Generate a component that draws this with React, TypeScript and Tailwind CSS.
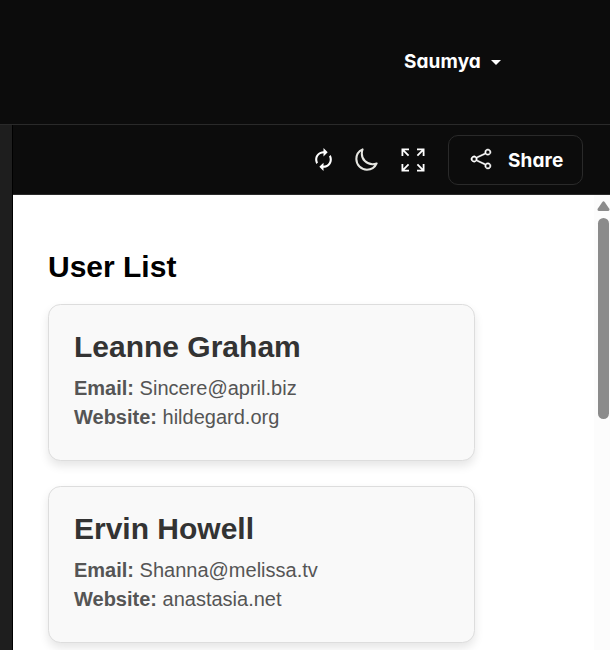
import React from "react";
import { BsShare } from "react-icons/bs";
import { IoMoonOutline } from "react-icons/io5";
import { MdAutorenew } from "react-icons/md";

const users = [
  { name: "Leanne Graham", email: "Sincere@april.biz", website: "hildegard.org" },
  { name: "Ervin Howell", email: "Shanna@melissa.tv", website: "anastasia.net" },
];

function ExpandIcon() {
  return (
    <svg className="ml-[22px] shrink-0" width="24" height="24" viewBox="0 0 24 24" fill="none" stroke="currentColor" strokeWidth="1.8">
      <path d="M1.4 8V1.4H8M1.4 1.4L7.6 7.6" />
      <path d="M16 1.4H22.6V8M22.6 1.4L16.4 7.6" />
      <path d="M1.4 16V22.6H8M1.4 22.6L7.6 16.4" />
      <path d="M16 22.6H22.6V16M22.6 22.6L16.4 16.4" />
    </svg>
  );
}

function UserCard({ name, email, website }: { name: string; email: string; website: string }) {
  return (
    <article className="h-[157px] w-[427px] rounded-[12.5px] border border-[#dddddd] bg-[#f9f9f9] px-[25px] pt-6 shadow-[0_5px_10px_rgba(0,0,0,0.1)]">
      <h2 className="text-[30px] leading-[35px] font-bold text-[#333333]">{name}</h2>
      <p className="mt-[10px] text-[20px] leading-[29px] text-[#555555]">
        <strong>Email:</strong> {email}
        <br />
        <strong>Website:</strong> {website}
      </p>
    </article>
  );
}

export default function App() {
  return (
    <div className="flex h-[650px] w-[610px] flex-col overflow-hidden bg-[#0c0c0c] text-white">
      <header className="flex h-[125px] shrink-0 items-center border-b border-[#2a2a2a] pl-[404px] font-[Inter,sans-serif]">
        <span className="text-[19px] leading-6 font-bold tracking-[0.1px] [font-feature-settings:'cv11']">Saumya</span>
        <svg className="ml-[10px]" width="10" height="5" viewBox="0 0 10 5" fill="currentColor">
          <path d="M0 0H10L5 5Z" />
        </svg>
      </header>
      <div className="flex min-h-0 flex-1">
        <aside className="w-[13px] shrink-0 border-r border-black bg-[#1e1e1e]" />
        <div className="flex min-w-0 flex-1 flex-col">
          <div className="flex h-[70px] shrink-0 items-center border-b border-[#2a2a2a] pl-[298px]">
            <MdAutorenew className="shrink-0" size={25} />
            <IoMoonOutline className="ml-[18px] shrink-0 text-[#e6e6e1] [&_path]:[stroke-width:42px]" size={25} />
            <ExpandIcon />
            <button className="ml-[23px] flex h-[50px] w-[135px] shrink-0 items-center rounded-[10px] border border-[#2a2a2a] pl-[21.5px] font-[Inter,sans-serif]">
              <BsShare size={20} className="mb-px shrink-0 overflow-visible [&_path]:stroke-current [&_path]:[stroke-width:0.35px]" />
              <span className="mt-0.5 ml-[17.5px] text-[19px] leading-6 font-bold tracking-[0.1px] [font-feature-settings:'cv11']">Share</span>
            </button>
          </div>
          <div className="flex min-h-0 flex-1 bg-white font-['Liberation_Sans',Arial,sans-serif]">
            <main className="flex min-w-0 flex-1 flex-col overflow-hidden pt-[54px] pl-[35px]">
              <h1 className="text-[30px] leading-[35px] font-bold text-black">User List</h1>
              <div className="mt-5 flex flex-col gap-[25px]">
                {users.map((user) => (
                  <UserCard key={user.name} {...user} />
                ))}
              </div>
            </main>
            <div className="flex w-4 shrink-0 flex-col items-end bg-[#fcfcfc] pt-[6px]">
              <svg width="13" height="11" viewBox="0 0 13 11" fill="#8b8b8b">
                <path d="M5.2 1.2Q6.5-.6 7.8 1.2L12.3 7.7Q13 9.9 11.3 9.9H1.7Q0 9.9 .7 7.7Z" />
              </svg>
              <div className="mt-[6px] mr-px h-[201px] w-[11px] rounded-full bg-[#8b8b8b]" />
            </div>
          </div>
        </div>
      </div>
    </div>
  );
}
